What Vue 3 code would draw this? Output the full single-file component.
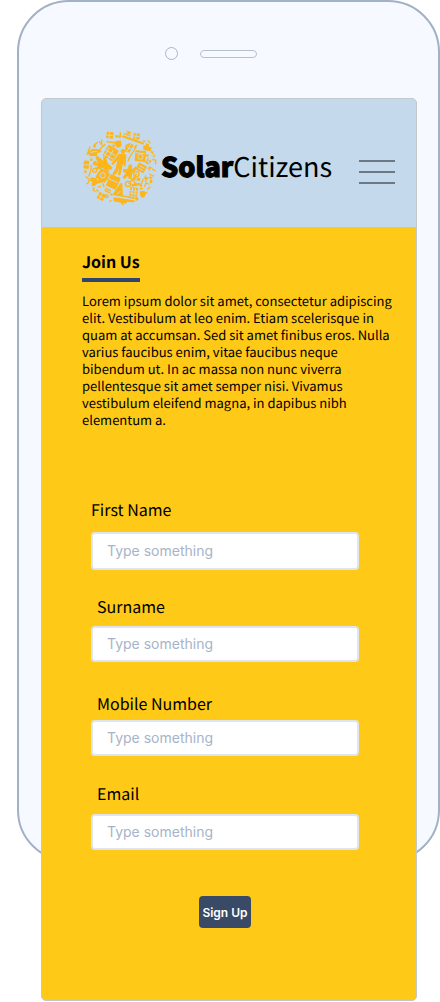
<script setup>
import { reactive } from 'vue'

const fields = [
  { id: 'first-name', label: 'First Name', type: 'text', kind: 'first' },
  { id: 'surname', label: 'Surname', type: 'text', kind: 'surname' },
  { id: 'mobile', label: 'Mobile Number', type: 'tel', kind: 'mobile' },
  { id: 'email', label: 'Email', type: 'email', kind: 'email' }
]

const form = reactive({ 'first-name': '', surname: '', mobile: '', email: '' })
</script>

<template>
  <div class="stage">
    <div class="shell">
      <div class="sensors">
        <span class="camera"></span>
        <span class="speaker"></span>
      </div>
    </div>

    <div class="screen">
      <header class="header">
        <a class="brand" href="#">
          <svg class="logo" viewBox="36 32 228 228" aria-hidden="true">
            <g fill="#fdb51c">
              <!-- people -->
              <circle cx="159" cy="96" r="7" />
              <path d="M146 103h18l5 5-2 32-5 2-2-14-3 14-6 26-7-1 3-22-6 16-10 8-4-4 10-18 5-24-13 14-5-4z" />
              <path d="M76 113l7-3 18 15-2-17 8 1 6 22 15 14-6 7-9-3 5 8-6 3-14-14-18 5-7-5 12-5-13-3-5-7 17 1z" />
              <path d="M160 148l12 2 5-15 10 2-2 14 12-10 5 6-15 15-3 18-8-2-2-9-10 10-7-5 11-13-9-3z" />
              <!-- solar panels -->
              <rect x="104" y="82" width="36" height="38" rx="4" transform="rotate(32 122 101)" />
              <rect x="113" y="169" width="33" height="37" rx="3" transform="rotate(24 129 188)" />
              <rect x="179" y="204" width="24" height="27" rx="2" transform="rotate(8 191 217)" />
              <rect x="190" y="41" width="19" height="19" rx="2" transform="rotate(8 199 50)" />
              <rect x="109" y="38" width="21" height="19" rx="2" transform="rotate(6 119 48)" />
              <rect x="83" y="221" width="21" height="21" rx="2" transform="rotate(28 94 232)" />
              <rect x="104" y="208" width="18" height="11" rx="2" transform="rotate(28 113 213)" />
              <rect x="41" y="124" width="16" height="24" rx="2" transform="rotate(4 49 136)" />
              <!-- appliances -->
              <rect x="195" y="94" width="32" height="32" rx="2" transform="rotate(5 211 110)" />
              <rect x="82" y="152" width="33" height="32" rx="2" transform="rotate(32 98 168)" />
              <rect x="200" y="134" width="27" height="23" rx="2" transform="rotate(28 213 146)" />
              <path d="M219 84l3-7 5 2 2-7 8 3-1 7 9 2-3 12-21-4z" />
              <path d="M135 66l17-3 3 13-4 8-10 1-5-8zM109 65l27 3v5l-27-4z" />
              <path d="M52 97l17-9 20 2 6 7-14 5 1 8-23 1-2-6-8 2z" />
              <path d="M62 174l19 3-1 6 16-2 17-8 3 6-17 10-18 4-8 8-9-3 3-10-6-5z" />
              <path d="M210 216l13-2 4 8-3 10-8 4-6-9z" />
              <path d="M151 192l6 0 2 42-32-8z" />
              <path d="M160 228l35 6v5l-36-6z" />
              <path d="M159 48l63 22-1 6-66-23z" />
              <path d="M131 234l63 9-1 6-22-1-3 5-37-7z" />
              <path d="M166 78l12-7 13 6-13 23-13-5z" />
              <path d="M190 173l21 3-1 9-20-3zM184 194l25-4 2 7-26 5z" />
            </g>

            <!-- panel and appliance cut-outs -->
            <g fill="none" stroke="#c4daec" stroke-width="3">
              <path d="M118 84l-16 28M130 92l-16 28M106 91l30 18M99 102l30 18" />
              <path d="M115 178l28 12" />
              <path d="M188 204l-3 25M197 206l-3 24M179 213l24 3M178 221l24 3" />
              <path d="M199 41l-2 18M190 50l18 2M119 38l-2 19M109 47l21 2" />
              <path d="M97 222l-9 17M85 228l17 9M106 209l14 8M43 136l13 1" />
              <circle cx="211" cy="112" r="8" />
              <path d="M197 100l28 3" />
              <circle cx="98" cy="168" r="8" />
              <path d="M208 138l15 9M204 145l15 9" />
              <path d="M171 82l12 7M182 75l-11 21M61 99l21-3" />
              <path d="M145 232l30 5M151 215l-10 10M199 174l-1 9" />
            </g>

            <!-- outlined tools, wheels and notes -->
            <g fill="none" stroke="#fdb51c" stroke-width="4" stroke-linecap="round">
              <circle cx="199" cy="164" r="8" />
              <circle cx="174" cy="194" r="8" />
              <circle cx="74" cy="153" r="6" />
              <circle cx="110" cy="231" r="4" />
              <path d="M176 193l11-13 12-16M187 180l11 14h12" />
              <path d="M176 119l22-36M193 83l7-5M177 119l-3 6" />
              <path d="M99 78l-13 19M104 75l-3 5M57 170l6-20 1-12" />
              <path d="M151 40v11M95 62v13M82 70l-10 7M88 67l5 7M60 83l-5 11" />
              <path d="M234 118l-3 8M247 121l10 1v12M254 107l-3 6M218 124l13 6" />
              <path d="M231 132l6 1M247 149l8 5M239 165l12 5M219 181l-5 13" />
              <path d="M80 212l4 4M122 222l4 7M204 240l-6 2M48 172l8 6" />
              <path d="M53 193l5-11 7 2M53 193h-3M224 201l4-10 8 3M233 209l7-6" />
              <path d="M234 64l6 7M220 64l5 3M163 43l17 7M123 244l-3 2M155 252l5 4" />
              <path d="M218 207l-7 2M73 190l-4 6M99 193l3 9M92 201l-6 2" />
            </g>

            <!-- lightning bolts, bulbs and coins -->
            <g fill="#fdb51c">
              <path d="M167 33l19 6-8 3 9 6-20-6 7-3z" />
              <path d="M228 165l-8 15 6-2-1 14 12-19-8 1z" />
              <path d="M240 171l10 4-8 3 7 6-10 4 3-8-5-3z" />
              <path d="M65 201l10 7-3 3 9 9-15-7 4-4z" />
              <path d="M245 91l-3 10 5-1-2 11 8-15-7 1z" />
              <path d="M240 138l-9 11 7-1-3 10 12-16-8 2z" />
              <circle cx="232" cy="109" r="4" />
              <circle cx="240" cy="126" r="4" />
              <circle cx="46" cy="157" r="4" />
              <circle cx="75" cy="131" r="6" />
              <circle cx="64" cy="121" r="4" />
              <circle cx="131" cy="79" r="4" />
              <circle cx="145" cy="176" r="4" />
              <circle cx="140" cy="51" r="4" />
              <circle cx="149" cy="52" r="4" />
              <circle cx="200" cy="237" r="4" />
              <circle cx="213" cy="199" r="4" />
              <circle cx="74" cy="81" r="4" />
              <circle cx="229" cy="220" r="3" />
              <circle cx="243" cy="188" r="4" />
            </g>
          </svg>
          <span class="wordmark"><strong>Solar</strong>Citizens</span>
        </a>
        <button class="menu" type="button" aria-label="Open menu">
          <span></span><span></span><span></span>
        </button>
      </header>

      <main class="content">
        <section class="intro">
          <h1>Join Us</h1>
          <p>
            Lorem ipsum dolor sit amet, consectetur adipiscing elit. Vestibulum at leo enim. Etiam
            scelerisque in quam at accumsan. Sed sit amet finibus eros. Nulla varius faucibus enim,
            vitae faucibus neque bibendum ut. In ac massa non nunc viverra pellentesque sit amet
            semper nisi. Vivamus vestibulum eleifend magna, in dapibus nibh elementum a.
          </p>
        </section>

        <form class="form" @submit.prevent>
          <div v-for="f in fields" :key="f.id" class="field" :class="f.kind">
            <label :for="f.id">{{ f.label }}</label>
            <input :id="f.id" v-model="form[f.id]" :type="f.type" placeholder="Type something" />
          </div>
          <button class="submit" type="submit">Sign Up</button>
        </form>
      </main>
    </div>
  </div>
</template>

<style>
body {
  background: #fff;
}
</style>

<style scoped>
.stage,
.stage * {
  box-sizing: border-box;
}

.stage {
  display: grid;
  padding-left: 17px;
  font-family: 'Noto Sans CJK SC', 'Noto Sans', sans-serif;
  color: #000;
  text-rendering: geometricPrecision;
}

.shell,
.screen {
  grid-area: 1 / 1;
}

.shell {
  margin-bottom: 140px;
  border: 2px solid #a3b1c4;
  border-radius: 52px;
  background: #f6f9ff;
}

.sensors {
  display: flex;
  align-items: center;
  justify-content: center;
  gap: 22px;
  padding: 45px 36px 0 0;
}

.camera {
  width: 13px;
  height: 13px;
  border: 1px solid #a9b5c6;
  border-radius: 50%;
}

.speaker {
  width: 57px;
  height: 8px;
  border: 1px solid #b5c0cf;
  border-radius: 4px;
}

.screen {
  margin: 98px 23px 1px 24px;
  border: 1px solid #c3c8c8;
  border-radius: 5px;
  overflow: hidden;
  background: #ffc917;
}

.header {
  display: flex;
  align-items: center;
  justify-content: space-between;
  height: 128px;
  padding: 10px 21px 0 40px;
  background: #c4daec;
}

.brand {
  display: flex;
  align-items: center;
  gap: 3px;
  color: inherit;
  text-decoration: none;
}

.logo {
  width: 76px;
  height: 76px;
}

.wordmark {
  padding-bottom: 4px;
  font-size: 27px;
  line-height: 36px;
  white-space: nowrap;
}

.wordmark strong {
  font-weight: 900;
  -webkit-text-stroke: 1px #000;
}

.menu {
  display: flex;
  flex-direction: column;
  gap: 9px;
  width: 36px;
  margin-top: 8px;
  padding: 0;
  border: 0;
  background: none;
}

.menu span {
  height: 2px;
  background: #6c7883;
}

.content {
  padding: 22px 32px 72px 40px;
}

.intro h1 {
  width: fit-content;
  margin: 0;
  padding-bottom: 5px;
  border-bottom: 4px solid #30456b;
  font-size: 16px;
  line-height: 24px;
  font-weight: 700;
}

.intro p {
  margin: 10px -14px 0 0;
  font-size: 13px;
  line-height: 17px;
}

.form {
  display: flex;
  flex-direction: column;
  margin: 69px 25px 0 9px;
}

.field {
  display: flex;
  flex-direction: column;
}

.field label {
  padding-left: 6px;
  font-size: 16px;
  line-height: 24px;
}

.field input {
  width: 100%;
  height: 36px;
  padding: 0 14px 2px;
  border: 2px solid #dfe5ee;
  border-radius: 4px;
  background: #fff;
  color: #384a66;
  font-family: Inter, sans-serif;
  font-size: 14px;
}

.field input::placeholder {
  color: #a7b4c7;
  opacity: 1;
}

.first label {
  padding-left: 0;
}

.first input {
  height: 38px;
  margin-top: 11px;
}

.surname {
  margin-top: 24px;
}

.surname input {
  margin-top: 8px;
}

.mobile {
  margin-top: 29px;
}

.mobile input {
  margin-top: 5px;
}

.email {
  margin-top: 25px;
}

.email input {
  margin-top: 9px;
}

.submit {
  align-self: center;
  height: 32px;
  margin-top: 46px;
  padding: 0 3px;
  border: 0;
  border-radius: 4px;
  background: #384a66;
  color: #fff;
  font-family: Inter, sans-serif;
  font-size: 12px;
  font-weight: 600;
}
</style>
